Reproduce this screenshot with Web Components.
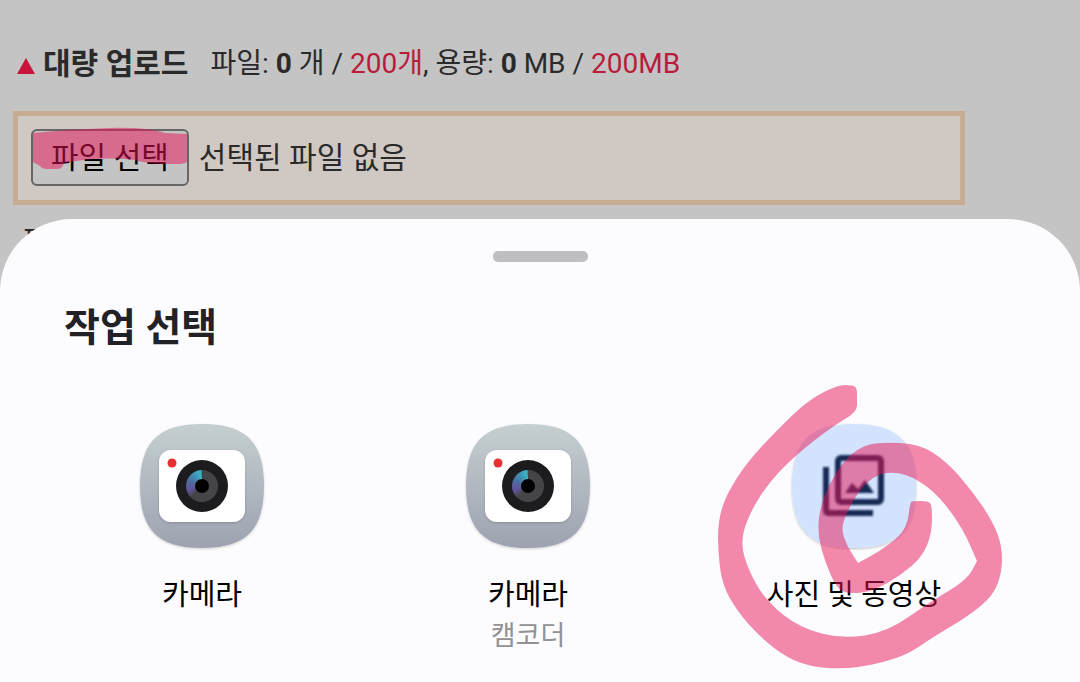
<!DOCTYPE html>
<html lang="ko">
<head>
<meta charset="utf-8">
<meta name="viewport" content="width=device-width, initial-scale=1">
<title>대량 업로드</title>
<style>
  body {
    margin: 0;
    min-height: 100vh;
    background: #c4c4c4;
    color: #2a2a2a;
    font-family: Roboto, "Noto Sans CJK KR", sans-serif;
    font-size: 30px;
    overflow: hidden;
  }
</style>
</head>
<body>
<upload-page>
  <upload-status slot="status" files="0" max-files="200개" size="0" max-size="200MB">대량 업로드</upload-status>
  <file-picker slot="picker">선택된 파일 없음</file-picker>
  <span slot="list">파일</span>
</upload-page>

<action-sheet heading="작업 선택">
  <app-tile label="카메라"><camera-icon></camera-icon></app-tile>
  <app-tile label="카메라" detail="캠코더"><camera-icon></camera-icon></app-tile>
  <app-tile label="사진 및 동영상" marked><gallery-icon></gallery-icon></app-tile>
</action-sheet>

<script>
class UploadPage extends HTMLElement {
  constructor() {
    super();
    this.attachShadow({ mode: 'open' }).innerHTML = `
      <style>
        :host {
          display: flex;
          flex-direction: column;
          gap: 27px;
          padding: 44px 115px 0 13px;
        }
        .files {
          display: flex;
          flex-direction: column;
          gap: 16px;
        }
        .list {
          padding-left: 10px;
          line-height: 40px;
        }
      </style>
      <slot name="status"></slot>
      <div class="files">
        <slot name="picker"></slot>
        <div class="list"><slot name="list"></slot></div>
      </div>
    `;
  }
}

class UploadStatus extends HTMLElement {
  connectedCallback() {
    const get = (name) => this.getAttribute(name);
    this.attachShadow({ mode: 'open' }).innerHTML = `
      <style>
        * {
          margin: 0;
          box-sizing: border-box;
        }
        :host {
          display: flex;
          align-items: center;
          height: 40px;
          padding-left: 4px;
          white-space: nowrap;
        }
        svg {
          width: 18px;
          height: 16px;
          margin: 3px 8px 0 0;
        }
        h2 {
          font-size: 30px;
          line-height: 40px;
        }
        p {
          margin-left: 22px;
          font-size: 28px;
          line-height: 40px;
        }
        em {
          font-style: normal;
          color: #b81c3c;
        }
      </style>
      <svg viewBox="0 0 18 16" aria-hidden="true"><path d="M9 0L18 16H0z" fill="#c8143c"/></svg>
      <h2><slot></slot></h2>
      <p>파일: <b>${get('files')}</b> 개 / <em>${get('max-files')}</em>, 용량: <b>${get('size')}</b> MB / <em>${get('max-size')}</em></p>
    `;
  }
}

class FilePicker extends HTMLElement {
  constructor() {
    super();
    this.attachShadow({ mode: 'open' }).innerHTML = `
      <style>
        * {
          box-sizing: border-box;
        }
        :host {
          display: flex;
          align-items: center;
          gap: 10px;
          padding: 13px 13px 14px;
          border: 5px solid #c8ab93;
          background: #d0c8c2;
          line-height: 40px;
        }
        .pick {
          position: relative;
          display: flex;
        }
        button {
          height: 57px;
          padding: 0 18px;
          border: 2px solid #666;
          border-radius: 6px;
          background: #c4c4c4;
          color: #000;
          font: inherit;
        }
        svg {
          position: absolute;
          top: 0;
          left: 0;
          width: 158px;
          height: 44px;
          overflow: visible;
          pointer-events: none;
        }
      </style>
      <div class="pick">
        <button type="button">파일 선택</button>
        <input type="file" aria-label="파일 선택" multiple hidden>
        <svg viewBox="0 0 158 44" aria-hidden="true">
          <path d="M2 4Q40 0 78-1Q116-2 134 4L156 5V33Q154 35 144 35Q116 35 104 31Q70 27 33 34Q31 40 26 40H14Q10 39 9 37L2 33z" fill="#ea1258" fill-opacity=".5"/>
        </svg>
      </div>
      <output><slot></slot></output>
    `;
    const input = this.shadowRoot.querySelector('input');
    this.shadowRoot.querySelector('button').addEventListener('click', () => input.click());
  }
}

class ActionSheet extends HTMLElement {
  connectedCallback() {
    this.attachShadow({ mode: 'open' }).innerHTML = `
      <style>
        * {
          margin: 0;
          box-sizing: border-box;
        }
        :host {
          position: fixed;
          left: 0;
          right: 0;
          bottom: 0;
          padding: 32px 0 26px;
          border-radius: 72px 72px 0 0;
          background: #fcfcff;
          box-sizing: border-box;
        }
        .handle {
          width: 95px;
          height: 11px;
          margin: 0 auto;
          border-radius: 5px;
          background: #bfbfc2;
        }
        h1 {
          margin: 40px 64px 69px;
          font-size: 39px;
          line-height: 52px;
          color: #222226;
        }
        .apps {
          display: grid;
          grid-template-columns: repeat(3, 1fr);
          padding: 0 63px 0 39px;
        }
      </style>
      <div class="handle"></div>
      <h1>${this.getAttribute('heading')}</h1>
      <div class="apps"><slot></slot></div>
    `;
  }
}

// outline of the hand-drawn marker loop, clockwise from its upper end
const LOOP = [
  [120, 0], [134, 0], [139, 3], [139, 14], [139, 27], [115, 41], [79, 69], [52, 96], [32, 127],
  [22, 157], [31, 187], [49, 217], [82, 243], [125, 254], [169, 247], [212, 217], [249, 195],
  [259, 176], [259, 176], [245, 144], [222, 112], [199, 94], [179, 87], [159, 89], [142, 104],
  [129, 127], [123, 144], [129, 161], [140, 178], [140, 178], [162, 166], [182, 151], [190, 137],
  [192, 117], [196, 116], [210, 116], [214, 120], [214, 147], [205, 171], [182, 191], [155, 206],
  [132, 209], [119, 204], [107, 177], [100, 151], [101, 127], [110, 101], [125, 77], [142, 62],
  [162, 57], [202, 59], [229, 77], [255, 107], [275, 137], [284, 161], [284, 187], [275, 211],
  [249, 232], [215, 252], [189, 270], [155, 280], [125, 284], [95, 282], [69, 273], [42, 252],
  [19, 226], [4, 199], [0, 166], [0, 138], [7, 112], [29, 77], [65, 39], [92, 14]
];

// closed curve through the middle of every side
function smooth(points) {
  const middle = (a, b) => `${(a[0] + b[0]) / 2} ${(a[1] + b[1]) / 2}`;
  const start = middle(points[points.length - 1], points[0]);
  const curves = points.map((p, i) => `Q${p[0]} ${p[1]} ${middle(p, points[(i + 1) % points.length])}`);
  return `M${start}${curves.join('')}z`;
}

class AppTile extends HTMLElement {
  connectedCallback() {
    const detail = this.getAttribute('detail') || '';
    const mark = this.hasAttribute('marked') ? `
      <svg viewBox="0 0 284 284" aria-hidden="true">
        <path d="${smooth(LOOP)}" fill="#e81455" fill-opacity=".5"/>
      </svg>` : '';
    this.attachShadow({ mode: 'open' }).innerHTML = `
      <style>
        * {
          box-sizing: border-box;
        }
        :host {
          position: relative;
          display: block;
        }
        button {
          display: flex;
          flex-direction: column;
          align-items: center;
          width: 100%;
          padding: 0;
          border: 0;
          background: none;
          color: #000;
          font: inherit;
          line-height: 40px;
          white-space: nowrap;
        }
        .label {
          margin-top: 26px;
          font-size: 29px;
        }
        .detail {
          height: 41px;
          font-size: 27px;
          line-height: 42px;
          color: #929295;
        }
        svg {
          position: absolute;
          top: -38px;
          left: calc(50% - 136px);
          width: 284px;
          height: 284px;
          pointer-events: none;
        }
      </style>
      <button type="button">
        <slot></slot>
        <span class="label">${this.getAttribute('label')}</span>
        <span class="detail">${detail}</span>
      </button>
      ${mark}
    `;
  }
}

class CameraIcon extends HTMLElement {
  constructor() {
    super();
    this.attachShadow({ mode: 'open' }).innerHTML = `
      <style>
        :host {
          display: block;
          width: 126px;
          height: 126px;
        }
        svg {
          display: block;
          overflow: visible;
        }
        .ring {
          width: 32px;
          height: 32px;
          border-radius: 50%;
          background: conic-gradient(#454548 0 62%, #62529a 70%, #4b6f9f 82%, #38b9c8 99%, #454548 100%);
        }
      </style>
      <svg width="126" height="126" viewBox="0 0 126 126" aria-hidden="true">
        <defs>
          <linearGradient id="body" x1="0" y1="0" x2="0" y2="1">
            <stop offset="0" stop-color="#c5cfd0"/>
            <stop offset="1" stop-color="#9da2b0"/>
          </linearGradient>
          <filter id="soft" x="-10%" y="-10%" width="120%" height="120%">
            <feDropShadow dx="0" dy="1" stdDeviation="1" flood-opacity=".18"/>
          </filter>
        </defs>
        <path d="M63 1C107 1 125 19 125 63S107 125 63 125S1 107 1 63S19 1 63 1z" fill="url(#body)" filter="url(#soft)"/>
        <rect x="20" y="27" width="86" height="72" rx="12" fill="#fff" filter="url(#soft)"/>
        <circle cx="33" cy="40" r="4.5" fill="#e5302f"/>
        <circle cx="63" cy="63" r="26" fill="#1c1c1e"/>
        <foreignObject x="47" y="47" width="32" height="32"><div class="ring"></div></foreignObject>
        <circle cx="63" cy="63" r="7" fill="#000"/>
      </svg>
    `;
  }
}

class GalleryIcon extends HTMLElement {
  constructor() {
    super();
    this.attachShadow({ mode: 'open' }).innerHTML = `
      <style>
        :host {
          display: block;
          width: 126px;
          height: 126px;
        }
        svg {
          display: block;
          overflow: visible;
        }
      </style>
      <svg width="126" height="126" viewBox="0 0 126 126" aria-hidden="true">
        <defs>
          <filter id="soft" x="-10%" y="-10%" width="120%" height="120%">
            <feDropShadow dx="0" dy="1" stdDeviation="1" flood-opacity=".25"/>
          </filter>
          <filter id="blur"><feGaussianBlur stdDeviation="1"/></filter>
        </defs>
        <path d="M63 1C107 1 125 19 125 63S107 125 63 125S1 107 1 63S19 1 63 1z" fill="#d3e3fd" filter="url(#soft)"/>
        <g fill="none" stroke="#142c55" stroke-width="6" filter="url(#blur)">
          <rect x="47" y="35" width="43" height="44" rx="3"/>
          <path d="M35 44V87Q35 90 38 90H82"/>
          <path d="M54 70L61 60L67 66L74 57L83 70z" fill="#142c55" stroke="none"/>
        </g>
      </svg>
    `;
  }
}

customElements.define('upload-page', UploadPage);
customElements.define('upload-status', UploadStatus);
customElements.define('file-picker', FilePicker);
customElements.define('action-sheet', ActionSheet);
customElements.define('app-tile', AppTile);
customElements.define('camera-icon', CameraIcon);
customElements.define('gallery-icon', GalleryIcon);
</script>
</body>
</html>
